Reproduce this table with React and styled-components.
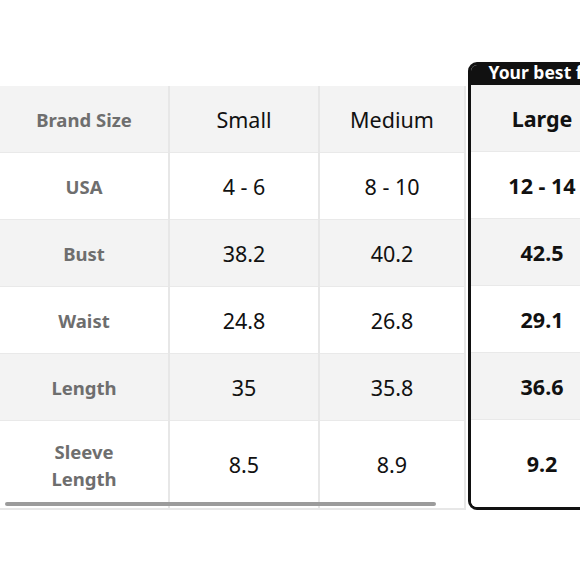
import React from "react";
import styled, { createGlobalStyle } from "styled-components";

const Global = createGlobalStyle`
  html, body { margin: 0; padding: 0; background: #fff; }
  body { font-family: "Noto Sans", "Open Sans", sans-serif; }
`;

const Page = styled.div`
  width: 580px;
  height: 580px;
  overflow: hidden;
  padding-top: 62px;
  box-sizing: border-box;
`;

const Table = styled.div`
  position: relative;
  display: flex;
  align-items: flex-end;
  width: max-content;
`;

const Column = styled.div`
  display: flex;
  flex-direction: column;
  width: ${(p) => p.$w}px;
  box-sizing: border-box;
  border-right: 2px solid #e7e7e7;
  border-bottom: 2px solid #e7e7e7;
  margin-right: ${(p) => p.$mr || 0}px;
`;

const BestBox = styled.div`
  display: flex;
  flex-direction: column;
  width: 148px;
  box-sizing: border-box;
  border: 3px solid #111;
  border-radius: 9px;
  overflow: hidden;
`;

const Tab = styled.div`
  height: 20px;
  background: #111;
  color: #fff;
  font-weight: 700;
  font-size: 17.5px;
  line-height: 15px;
  text-align: center;
  white-space: nowrap;
`;

const Cell = styled.div`
  height: ${(p) => p.$h}px;
  box-sizing: border-box;
  background: ${(p) => (p.$shade ? "#f3f3f3" : "#fff")};
  border-top: ${(p) => (p.$first ? "0" : "1px solid #e9e9e9")};
  display: flex;
  align-items: center;
  justify-content: center;
  text-align: center;
  white-space: nowrap;
  font-size: ${(p) => (p.$label ? 18.5 : 21.5)}px;
  line-height: 27px;
  font-weight: ${(p) => (p.$label || p.$bold ? 700 : 400)};
  color: ${(p) => (p.$label ? "#6e6e6e" : "#111")};
`;

const Scrollbar = styled.div`
  position: absolute;
  left: 5px;
  bottom: 4px;
  width: 431px;
  height: 4px;
  border-radius: 2px;
  background: #9b9b9b;
`;

const heights = [66, 67, 67, 67, 67, 88];
const labels = ["Brand Size", "USA", "Bust", "Waist", "Length", "Sleeve\nLength"];
const small = ["Small", "4 - 6", "38.2", "24.8", "35", "8.5"];
const medium = ["Medium", "8 - 10", "40.2", "26.8", "35.8", "8.9"];
const large = ["Large", "12 - 14", "42.5", "29.1", "36.6", "9.2"];

function Cells({ values, label, bold }) {
  return values.map((v, i) => (
    <Cell
      key={i}
      $h={heights[i]}
      $shade={i % 2 === 0}
      $first={i === 0}
      $label={label}
      $bold={bold}
    >
      <span>
        {v.split("\n").map((line, j) => (
          <React.Fragment key={j}>
            {j > 0 && <br />}
            {line}
          </React.Fragment>
        ))}
      </span>
    </Cell>
  ));
}

export default function App() {
  return (
    <>
      <Global />
      <Page>
        <Table>
          <Column $w={170}>
            <Cells values={labels} label />
          </Column>
          <Column $w={150}>
            <Cells values={small} />
          </Column>
          <Column $w={146} $mr={2}>
            <Cells values={medium} />
          </Column>
          <BestBox>
            <Tab>Your best fit</Tab>
            <Cells values={large} bold />
          </BestBox>
          <Scrollbar />
        </Table>
      </Page>
    </>
  );
}
